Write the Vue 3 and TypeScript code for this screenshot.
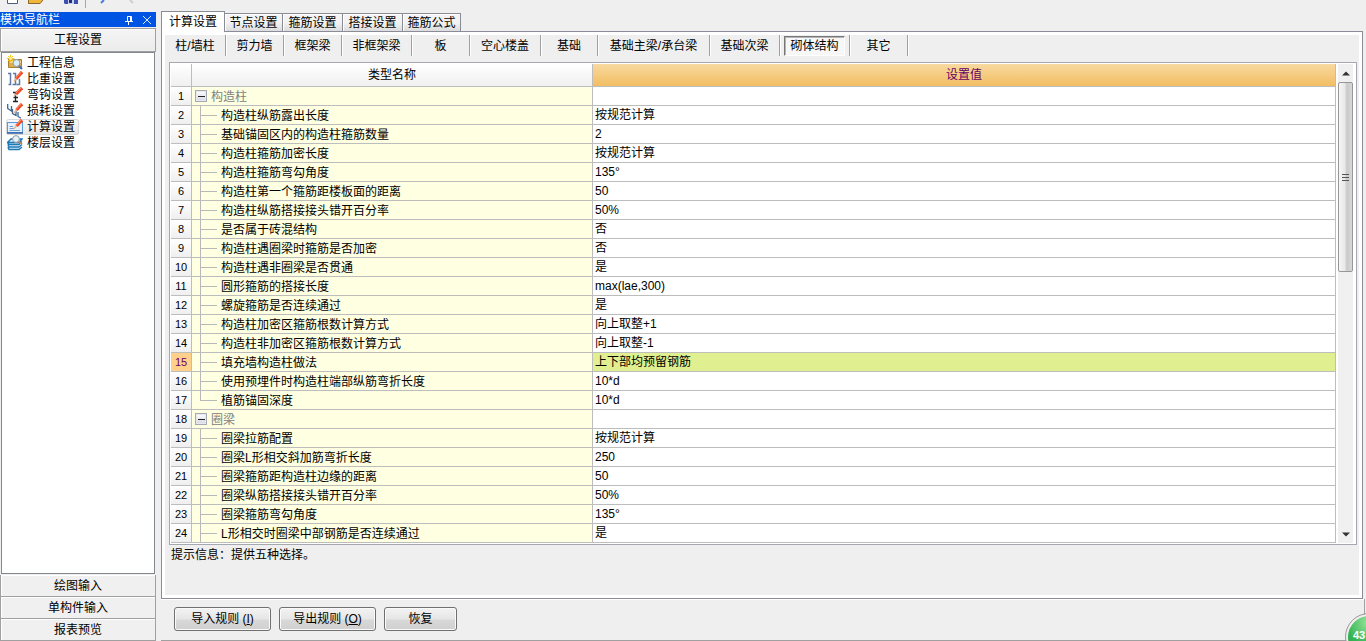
<script setup lang="ts">
import { ref } from 'vue'

interface Row { name: string; value: string; group?: boolean; last?: boolean }

const navItems: string[] = ['工程信息', '比重设置', '弯钩设置', '损耗设置', '计算设置', '楼层设置']
const navBottom: string[] = ['绘图输入', '单构件输入', '报表预览']
const tabs: string[] = ['计算设置', '节点设置', '箍筋设置', '搭接设置', '箍筋公式']
const members: string[] = ['柱/墙柱', '剪力墙', '框架梁', '非框架梁', '板', '空心楼盖', '基础', '基础主梁/承台梁', '基础次梁', '砌体结构', '其它']

const activeNav = ref(4)
const activeTab = ref(0)
const activeMember = ref(9)
const activeRow = ref(14)

const rows: Row[] = [
  { name: '构造柱', value: '', group: true },
  { name: '构造柱纵筋露出长度', value: '按规范计算' },
  { name: '基础锚固区内的构造柱箍筋数量', value: '2' },
  { name: '构造柱箍筋加密长度', value: '按规范计算' },
  { name: '构造柱箍筋弯勾角度', value: '135°' },
  { name: '构造柱第一个箍筋距楼板面的距离', value: '50' },
  { name: '构造柱纵筋搭接接头错开百分率', value: '50%' },
  { name: '是否属于砖混结构', value: '否' },
  { name: '构造柱遇圈梁时箍筋是否加密', value: '否' },
  { name: '构造柱遇非圈梁是否贯通', value: '是' },
  { name: '圆形箍筋的搭接长度', value: 'max(lae,300)' },
  { name: '螺旋箍筋是否连续通过', value: '是' },
  { name: '构造柱加密区箍筋根数计算方式', value: '向上取整+1' },
  { name: '构造柱非加密区箍筋根数计算方式', value: '向上取整-1' },
  { name: '填充墙构造柱做法', value: '上下部均预留钢筋' },
  { name: '使用预埋件时构造柱端部纵筋弯折长度', value: '10*d' },
  { name: '植筋锚固深度', value: '10*d', last: true },
  { name: '圈梁', value: '', group: true },
  { name: '圈梁拉筋配置', value: '按规范计算' },
  { name: '圈梁L形相交斜加筋弯折长度', value: '250' },
  { name: '圈梁箍筋距构造柱边缘的距离', value: '50' },
  { name: '圈梁纵筋搭接接头错开百分率', value: '50%' },
  { name: '圈梁箍筋弯勾角度', value: '135°' },
  { name: 'L形相交时圈梁中部钢筋是否连续通过', value: '是' },
]
</script>

<template>
  <div class="app">
    <aside class="side">
      <div class="toolbar" aria-hidden="true">
        <svg width="150" height="8" viewBox="0 0 150 8">
          <path d="M7.5 0V3.5H17.5V0" fill="#fff" stroke="#4d5b7c" />
          <path d="M28 0H43L40 4H28Z" fill="#f0b63c" /><path d="M28.5 0V3.5H40L43 0" fill="none" stroke="#8a682c" />
          <path d="M64 0H78V4H65L64 3Z" fill="#3d4fb0" /><path d="M68 0H74V4H68Z" fill="#c8d0ea" /><path d="M69 0H72V3H69Z" fill="#23306f" />
          <path d="M85.5 0V8" stroke="#a6a6a6" />
          <path d="M104 0L101 3" stroke="#4a7fd6" stroke-width="2" />
          <path d="M130 0L133 3" stroke="#cfcfcf" stroke-width="2" />
        </svg>
      </div>
      <header class="title">
        <span>模块导航栏</span>
        <span class="tools">
          <button type="button" aria-label="固定">
            <svg width="10" height="10" viewBox="0 0 10 10"><path d="M3.5 6V1.5H7.500V6M6.500 1V6M1 6.500H9M4.500 7V10" fill="none" stroke="#fff" /></svg>
          </button>
          <button type="button" aria-label="关闭">
            <svg width="10" height="10" viewBox="0 0 10 10"><path d="M1 1L9 9M9 1L1 9" stroke="#dce8ff" /></svg>
          </button>
        </span>
      </header>
      <button type="button" class="bar top">工程设置</button>
      <nav class="list">
        <button v-for="(n, i) in navItems" :key="n" type="button" class="nav" :class="{ on: i === activeNav }" @click="activeNav = i">
          <svg width="16" height="16" viewBox="0 0 16 16" aria-hidden="true">
            <g v-if="i === 0">
              <path d="M1.5 3.500H7L8 4.500H14.500V12.500H1.500Z" fill="#dfae4a" stroke="#a8802f" /><path d="M3 6H14V8H3Z" fill="#f6d98a" />
              <path d="M3.500 0V7M0 3.500H7M1 1L6 6M6 1L1 6" stroke="#f6c518" />
              <circle cx="3.500" cy="3.500" r="1.300" fill="#fff6b8" />
              <circle cx="9.500" cy="8" r="3.500" fill="#d8ecfa" stroke="#8b9aa8" /><path d="M12 11L15 14" stroke="#4d6fb5" stroke-width="2.200" />
            </g>
            <g v-else-if="i === 1">
              <path d="M1 2.500H3.500V13.500H1.500M6 2.500H8.500V13.500H5.500M9.500 13.500H12.500V8" fill="none" stroke="#5c7aa5" stroke-width="1.500" />
              <path d="M15 1L9 8" stroke="#ef4a28" stroke-width="3.200" /><path d="M14.500 .5L9 7" stroke="#ff8a66" /><path d="M9 7.500L7 10.500" stroke="#e9b48f" stroke-width="1.600" />
            </g>
            <g v-else-if="i === 2">
              <path d="M6 5.500H10M8.500 5V14M6.500 10.500H11M6 14.500H11" stroke="#222" stroke-width="1.300" />
              <path d="M15 1L9 7" stroke="#ef4a28" stroke-width="3.200" /><path d="M14.500 .5L9 6" stroke="#ff8a66" /><path d="M9 7L7 9" stroke="#e9b48f" stroke-width="1.600" />
            </g>
            <g v-else-if="i === 3">
              <path d="M.7 1V5.500L4.500 8V3M5.500 6V10.500L9 12.500V8M11 9V13.500L14 15.300" fill="none" stroke="#3e6795" stroke-width="1.300" />
              <path d="M15 1L9.500 7" stroke="#ef4a28" stroke-width="3.200" /><path d="M14.500 .5L9 6.500" stroke="#ff8a66" /><path d="M9.500 7L7 10" stroke="#e9b48f" stroke-width="1.600" />
            </g>
            <g v-else-if="i === 4">
              <rect x=".5" y="3.500" width="15" height="10" fill="#e5f0fc" stroke="#5b9ad8" /><path d="M0 14H16" stroke="#2f62a8" stroke-width="1.500" />
              <path d="M2.500 7.500H6M2.500 9.500H7M2.500 11.500H13" stroke="#6fa0d2" />
              <path d="M15 1L9.500 7" stroke="#ef4a28" stroke-width="3.200" /><path d="M14.500 .5L9 6.500" stroke="#ff8a66" /><path d="M9.500 7L7 9.500" stroke="#e9b48f" stroke-width="1.600" />
            </g>
            <g v-else>
              <path d="M.5 6.500L4 3.500H14.500L12 6.500V14.500H1L.5 12Z" fill="#d8ecf8" />
              <path d="M.5 7.500L4 4H15L12 7.500H.5L2 9.500H12L15 6.500M1 9.500L2 12H12L15 9.500M1 12L2 14.500H12L15 12" fill="none" stroke="#1d79b4" stroke-width="1.400" />
              <circle cx="9" cy="4" r="3.400" fill="#e6f0f8" stroke="#8a9cac" /><path d="M11.500 6.500L15 9" stroke="#c08a5c" stroke-width="2" />
            </g>
          </svg>
          <span>{{ n }}</span>
        </button>
      </nav>
      <button v-for="b in navBottom" :key="b" type="button" class="bar">{{ b }}</button>
    </aside>

    <main class="main">
      <div class="tabs" role="tablist">
        <button v-for="(t, i) in tabs" :key="t" type="button" role="tab" class="tab" :class="{ on: i === activeTab }" :aria-selected="i === activeTab" @click="activeTab = i">{{ t }}</button>
      </div>
      <section class="panel">
        <div class="members">
          <div v-for="(m, i) in members" :key="m" class="member-cell">
            <button type="button" class="member" :class="{ on: i === activeMember }" @click="activeMember = i">{{ m }}</button>
          </div>
        </div>
        <div class="gridbox">
          <div class="scroller">
            <table>
              <colgroup><col class="c-num" /><col class="c-name" /><col /></colgroup>
              <thead>
                <tr><th></th><th>类型名称</th><th class="hot">设置值</th></tr>
              </thead>
              <tbody>
                <tr v-for="(r, i) in rows" :key="i" :class="{ sel: i === activeRow }" @click="activeRow = i">
                  <th scope="row">{{ i + 1 }}</th>
                  <td class="name">
                    <div class="line">
                      <button v-if="r.group" type="button" class="fold" aria-label="折叠"></button>
                      <span v-else class="branch" :class="{ last: r.last }"></span>
                      <span class="text" :class="{ group: r.group }">{{ r.name }}</span>
                    </div>
                  </td>
                  <td class="value">{{ r.value }}</td>
                </tr>
              </tbody>
            </table>
          </div>
          <div class="scroll">
            <button type="button" class="arrow" aria-label="向上滚动"><svg width="8" height="5" viewBox="0 0 8 5"><path d="M0 4.500L4 .5L8 4.500Z" fill="#333" /></svg></button>
            <div class="track">
              <div class="thumb"><i></i><i></i><i></i></div>
            </div>
            <button type="button" class="arrow" aria-label="向下滚动"><svg width="8" height="5" viewBox="0 0 8 5"><path d="M0 .5H8L4 4.500Z" fill="#333" /></svg></button>
          </div>
        </div>
        <p class="hint">提示信息：提供五种选择。</p>
      </section>
      <footer class="actions">
        <button type="button" class="btn">导入规则 (<u>I</u>)</button>
        <button type="button" class="btn">导出规则 (<u>O</u>)</button>
        <button type="button" class="btn small">恢复</button>
      </footer>
    </main>
    <div class="ball">43</div>
  </div>
</template>

<style>
body { margin: 0; background: #efefef; }
</style>

<style scoped>
* { box-sizing: border-box; }
.app {
  display: flex; height: 100vh; overflow: hidden; position: relative; background: #efefef; color: #000;
  font: 12px/16px "Liberation Sans", "Noto Sans CJK SC", sans-serif;
}
button { font: inherit; color: inherit; padding: 0; margin: 0; border: 0; background: none; white-space: nowrap; }
svg { display: block; }

.side { width: 156px; flex: none; display: flex; flex-direction: column; margin-right: 5px; }
.toolbar { height: 12px; flex: none; }
.title { height: 15px; flex: none; display: flex; align-items: center; justify-content: space-between; background: #0054e3; color: #fff; padding-right: 4px; }
.tools { display: flex; gap: 8px; }
.bar { height: 22px; flex: none; border: 1px solid #a0a0a0; border-top-width: 0; background: #f0f0f0; box-shadow: inset 1px 1px #fff; }
.bar.top { height: 24px; border-top-width: 1px; margin-top: 1px; background: linear-gradient(#f4f4f4, #ececec); }
.list { flex: 1; min-height: 0; display: flex; flex-direction: column; align-items: flex-start; background: #fff; border: 1px solid #828790; padding: 2px 0 0 4px; margin: 0 1px 1px; }
.nav { display: flex; align-items: center; gap: 4px; height: 16px; padding: 0 4px 0 1px; border-radius: 3px; }
.nav.on { background: linear-gradient(#fafafa, #e6e6e6); box-shadow: inset 0 0 0 1px #d9d9d9; }

.main { flex: 1; min-width: 0; display: flex; flex-direction: column; padding-top: 11px; }
.tabs { display: flex; align-items: flex-end; height: 20px; flex: none; }
.tab { width: 60px; height: 18px; padding-top: 2px; line-height: 15px; border: 1px solid #898c95; border-left-width: 0; border-bottom: 0; background: linear-gradient(#f3f3f3 50%, #dcdcdc); box-shadow: inset 1px 1px #fff; }
.tab:last-child, .tab:nth-child(2) { width: 58px; }
.tab.on { width: 64px; height: 21px; margin-bottom: -1px; padding: 0; border-left-width: 1px; background: #fff; z-index: 1; }
.panel { flex: 1; min-height: 0; display: flex; flex-direction: column; margin-right: 3px; border: 1px solid #8a8c9a; box-shadow: inset 0 0 0 3px #fff; padding: 3px 5px 3px 7px; }
.members { display: grid; grid-template-columns: 61px 58px 58px 70px 58px 71px 57px 112px 70px 70px 58px; flex: none; height: 21px; margin: 0 0 6px -4px; }
.member-cell { display: flex; align-items: center; justify-content: center; border-right: 1px solid #a0a0a0; box-shadow: 1px 0 #fff; }
.member { height: 20px; padding: 0 5px; }
.member.on { border: 1px solid; border-color: #777 #fff #fff #777; background: #f7f7f7; box-shadow: inset 1px 1px #b4b4b4; }
.gridbox { flex: 1; min-height: 0; display: flex; border: 1px solid #a5a8ae; background: #fff; padding: 1px; }
.scroller { flex: 1; min-width: 0; overflow: hidden; }
table { width: 100%; border-collapse: separate; border-spacing: 0; table-layout: fixed; }
.c-num { width: 21px; }
.c-name { width: 401px; }
th, td { padding: 0; font-weight: normal; border-right: 1px solid #bdbdbd; border-bottom: 1px solid #bdbdbd; height: 19px; line-height: 18px; }
thead th { height: 23px; line-height: 22px; background: linear-gradient(#fff, #f0f0f0); }
thead th.hot { background: linear-gradient(#f8d9a0, #f2be62); color: #660066; }
tbody th { background: linear-gradient(#fff, #efefef); font-size: 11px; }
.name { background: #ffffe1; }
.value { padding-left: 2px; white-space: nowrap; }
.sel th { background: #ffd08a; color: #660066; }
.sel .value { background: #e0f090; }
.line { display: flex; align-items: center; height: 18px; white-space: nowrap; }
.text { padding-top: 2px; line-height: 16px; }
.group { color: #808080; }
.fold { width: 12px; height: 12px; margin: 0 4px 0 3px; border: 1px solid #a4a9b2; background: linear-gradient(#222, #222) center / 7px 1px no-repeat, linear-gradient(#fff, #d4d8e4); box-shadow: inset 0 0 0 1px #e8e8ee; }
.branch { width: 17px; height: 18px; margin: 0 4px 0 8px; background: linear-gradient(#b8b8b8, #b8b8b8) 0 0 / 1px 100% no-repeat, linear-gradient(#b8b8b8, #b8b8b8) 0 9px / 100% 1px no-repeat; }
.branch.last { background-size: 1px 9px, 100% 1px; }
.scroll { width: 15px; margin: 0 2px; flex: none; display: flex; flex-direction: column; background: #f0f0f0; }
.arrow { height: 18px; flex: none; display: flex; align-items: center; justify-content: center; }
.track { flex: 1; min-height: 0; }
.thumb { height: 43%; display: flex; flex-direction: column; align-items: center; justify-content: center; gap: 2px; border: 1px solid #979797; border-radius: 2px; background: linear-gradient(90deg, #f6f6f6, #e8e8e8 45%, #c9c9c9 60%, #d8d8d8); }
.thumb i { width: 7px; height: 1px; background: #555; }
.hint { height: 50px; flex: none; margin: 0; padding: 2px; }
.actions { display: flex; gap: 8px; flex: none; height: 42px; padding: 8px 13px; margin-right: 1px; border: solid #a0a0a0; border-width: 0 1px 1px 0; box-shadow: inset 0 1px #fff; }
.btn { width: 97px; height: 24px; border: 1px solid #707070; border-radius: 3px; background: linear-gradient(#f3f3f3, #e6e6e6 50%, #d8d8d8 55%, #d0d0d0); box-shadow: inset 0 0 0 1px #fafafa; }
.btn.small { width: 73px; }
.ball { position: absolute; right: -26px; bottom: -19px; width: 46px; height: 46px; padding: 13px 0 0 5px; border: 2px solid #eee; border-radius: 50%; outline: 1px solid #999; background: radial-gradient(circle at 50% 15%, #9be59b, #35b454 55%, #229442); color: #fff; font-size: 11px; line-height: 12px; font-weight: bold; }
</style>
